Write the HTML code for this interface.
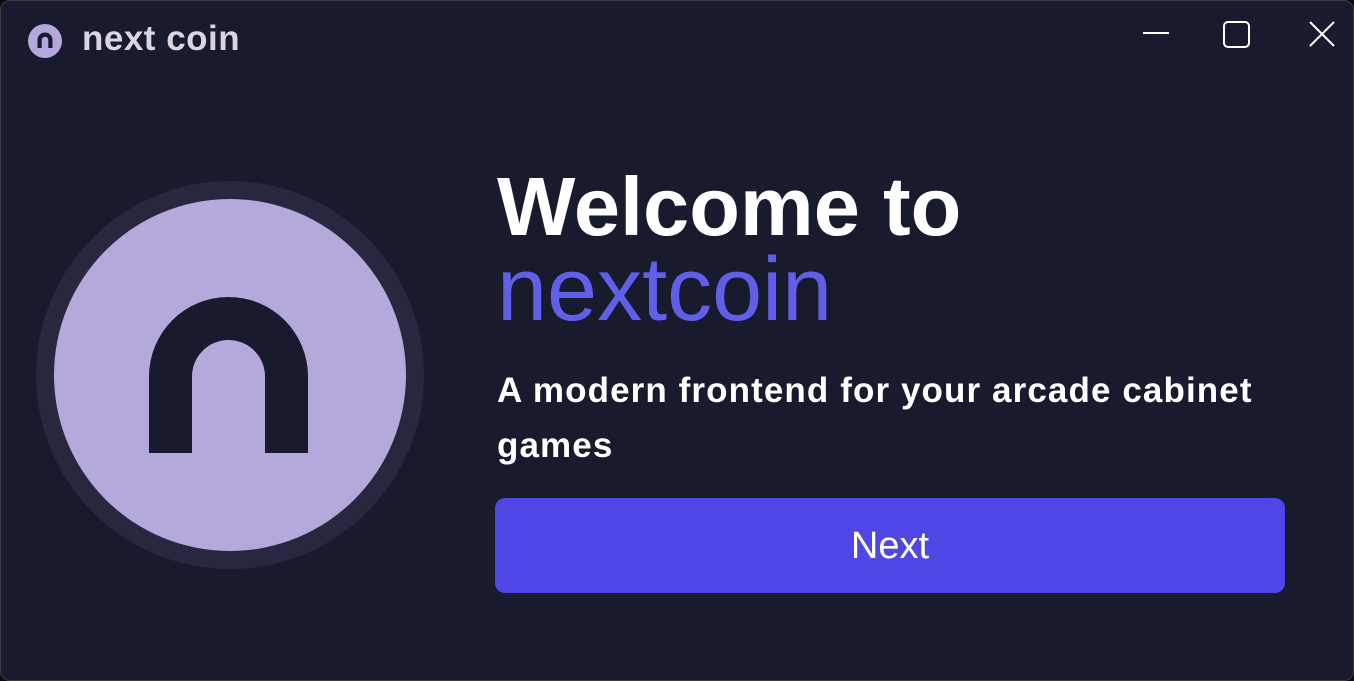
<!DOCTYPE html>
<html><head><meta charset="utf-8"><style>
html,body{margin:0;padding:0;width:1354px;height:681px;background:#0b0b0f;overflow:hidden}
.win{position:absolute;left:0;top:0;width:1352px;height:679px;border:1px solid #3a3a44;border-radius:10px;background:#181a2e;font-family:"Liberation Sans",sans-serif}
.t{position:absolute;white-space:nowrap}
</style></head><body>
<div class="win">
<svg style="position:absolute;left:26px;top:22px" width="36" height="36" viewBox="0 0 36 36"><circle cx="18" cy="18" r="17" fill="#b5a9dc"/><path d="M10.5 25V17a7.5 7.5 0 0 1 15 0v8h-4.2v-8a3.3 3.3 0 0 0-6.6 0v8z" fill="#181a2e"/></svg>
<div class="t" style="left:81px;top:18px;font-size:35px;font-weight:bold;color:#d9d6e2;letter-spacing:0.5px">next coin</div>
<div style="position:absolute;left:1142px;top:31px;width:26px;height:2px;background:#fff"></div>
<div style="position:absolute;left:1222px;top:20px;border:2px solid #fff;border-radius:5px;box-sizing:border-box;width:27px;height:27px"></div>
<svg style="position:absolute;left:1308px;top:20px" width="26" height="26" viewBox="0 0 26 26"><path d="M1 1L25 25M25 1L1 25" stroke="#fff" stroke-width="2"/></svg>
<svg style="position:absolute;left:35px;top:180px" width="390" height="390" viewBox="0 0 390 390"><circle cx="194" cy="194" r="194" fill="#27283f"/><circle cx="194" cy="194" r="176" fill="#b5a9dc"/><path d="M113 272V195.5a79.5 79.5 0 0 1 159 0V272h-43V195.5a36.5 36.5 0 0 0-73 0V272z" fill="#181a2e"/></svg>
<div class="t" style="left:496px;top:158px;font-size:83px;font-weight:bold;color:#fff">Welcome to</div>
<div class="t" style="left:496px;top:238px;font-size:90px;color:#5f5fe8">nextcoin</div>
<div class="t" style="left:496px;top:362px;font-size:35px;font-weight:bold;color:#fff;line-height:55px;white-space:normal;width:790px;letter-spacing:1.1px">A modern frontend for your arcade cabinet games</div>
<div style="position:absolute;left:494px;top:497px;width:790px;height:95px;background:#4f46e5;border-radius:10px;color:#fff;font-size:38px;text-align:center;line-height:97px">Next</div>
</div>
</body></html>
